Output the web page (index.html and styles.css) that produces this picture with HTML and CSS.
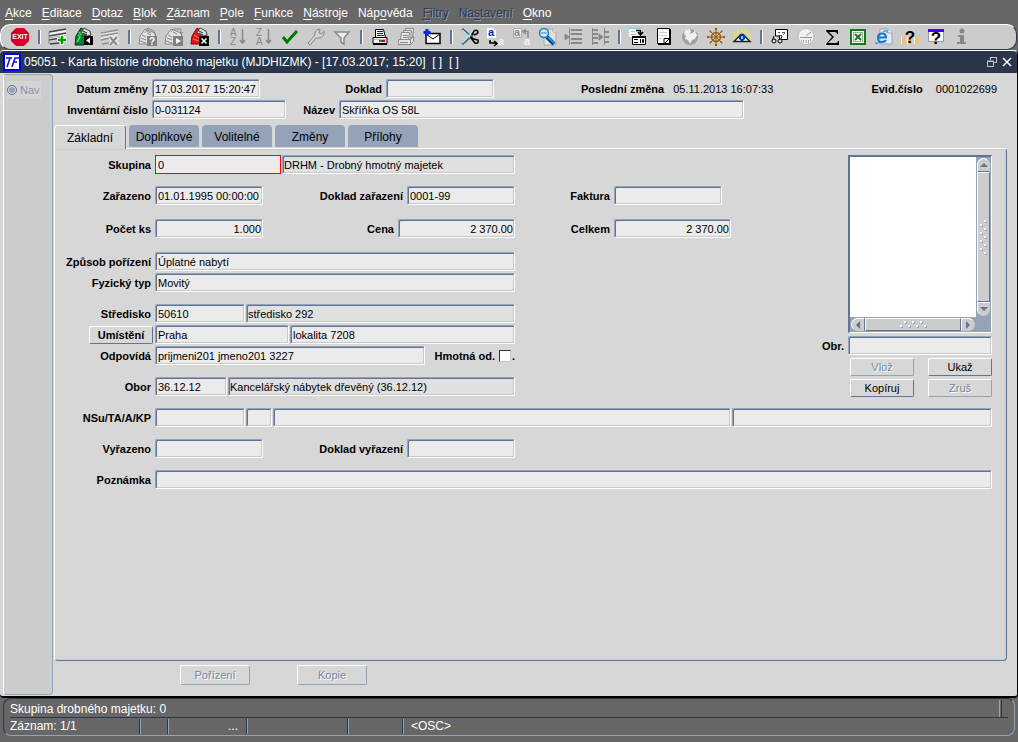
FILE: index.html
```html
<!DOCTYPE html>
<html lang="cs">

<head>
    <meta charset="UTF-8">
    <meta name="viewport" content="width=device-width, initial-scale=1.0">
    <title>Karta historie drobného majetku</title>
    <link rel="stylesheet" href="styles.css">
</head>

<body>
    <nav class="menu">
        <button type="button"><u>A</u>kce</button>
        <button type="button"><u>E</u>ditace</button>
        <button type="button"><u>D</u>otaz</button>
        <button type="button"><u>B</u>lok</button>
        <button type="button"><u>Z</u>áznam</button>
        <button type="button"><u>P</u>ole</button>
        <button type="button"><u>F</u>unkce</button>
        <button type="button"><u>N</u>ástroje</button>
        <button type="button">Náp<u>o</u>věda</button>
        <button type="button" disabled><u>F</u>iltry</button>
        <button type="button" disabled>Na<u>s</u>tavení</button>
        <button type="button"><u>O</u>kno</button>
    </nav>

    <div class="toolbar">
        <button type="button" aria-label="Konec"><svg viewBox="0 0 20 20"><path d="M6 1h8l5 5v8l-5 5H6l-5-5V6z" fill="#d4002a"/><text x="10" y="12" text-anchor="middle" class="exit-text">EXIT</text></svg></button>
        <span class="sep"></span>
        <button type="button" aria-label="Nový záznam"><svg viewBox="0 0 20 20"><path d="M1 6l17-3v8L1 14z" fill="#f4f4f4"/><path d="M1 5l17-3M1 9l17-3M1 13l12-2M2 17l9-1" stroke="#444" stroke-width="1.5" fill="none"/><path d="M1 11l17-3" stroke="#aaa"/><path d="M1 5v12" stroke="#888"/><path d="M12 8h4v3h3v4h-3v3h-4v-3H9v-4h3z" fill="#fff"/><path d="M13 9h2v3h3v2h-3v3h-2v-3h-3v-2h3z" fill="#00a000" stroke="#00a000" stroke-width=".5"/></svg></button>
        <button type="button" aria-label="Uložit"><svg viewBox="0 0 20 20"><path d="M2 9l5-8 9 6 1 4-7 7H1z" fill="#008030" stroke="#003010"/><path d="M7 6l3-5 6 3 1 4-4 1z" fill="#ddd" stroke="#444"/><path d="M9 4l4 2M9 6l4 2" stroke="#222"/><path d="M4 8l2 2-3 5M5 5l2 3" stroke="#40e060" stroke-width="1.5" fill="none"/><path d="M10 9h9v9h-9z"/><path d="M16 10.500v6l-4-3z" fill="#fff"/></svg></button>
        <button type="button" aria-label="Smazat záznam"><svg viewBox="0 0 20 20"><path d="M1 6l17-3v6L1 13z" fill="#e6e6e6"/><path d="M1 6l17-3M1 9l17-3M1 13l9-2M2 17l7-1" stroke="#909090" stroke-width="1.5" fill="none"/><path d="M10 10l8 8M18 10l-8 8" stroke="#eee" stroke-width="4"/><path d="M10 10l7 8M17 10l-7 8" stroke="#888" stroke-width="2"/></svg></button>
        <span class="sep"></span>
        <button type="button" aria-label="Zadat dotaz"><svg viewBox="0 0 20 20"><path d="M2 9l5-7 10 4 1 4-6 7H1z" fill="#e2e2e2" stroke="#888"/><path d="M7 6l3-5 6 3 1 4M9 4l4 2M9 6l4 2M4 8l4 2M3 11l5 2M2 14l6 2" stroke="#888" fill="none"/><path d="M9 9h10v10H9z" fill="#808080"/><text x="14" y="17.500" text-anchor="middle" class="badge-text">?</text></svg></button>
        <button type="button" aria-label="Provést dotaz"><svg viewBox="0 0 20 20"><path d="M2 9l5-7 10 4 1 4-6 7H1z" fill="#e2e2e2" stroke="#888"/><path d="M7 5l3-3h7v5M15 5l2 2 2-2M9 5l4 2M4 8l4 2M3 11l5 2M2 14l6 2" stroke="#888" fill="none"/><path d="M9 9h10v10H9z" fill="#808080"/><path d="M12 11v6l5-3z" fill="#fff"/></svg></button>
        <button type="button" aria-label="Zrušit dotaz"><svg viewBox="0 0 20 20"><path d="M2 9l5-8 9 6 2 4-8 6H1z" fill="#e01818" stroke="#800"/><path d="M7 6l3-5 6 3 1 4-4 1z" fill="#ddd" stroke="#444"/><path d="M9 4l4 2M9 6l4 2" stroke="#333"/><path d="M4 8l5 3M3 12l6 2" stroke="#ff7070"/><path d="M9 9h10v10H9z"/><path d="M11.500 11.500l5 5m0-5l-5 5" stroke="#fff" stroke-width="1.5"/></svg></button>
        <span class="sep"></span>
        <button type="button" aria-label="Třídit vzestupně"><svg viewBox="0 0 20 20"><g class="sort-text"><text x="2" y="9">A</text><text x="2" y="18">Z</text></g><path d="M14.500 2v14M12 13l2.500 3 2.500-3" fill="none" stroke="#888" stroke-width="1.5"/></svg></button>
        <button type="button" aria-label="Třídit sestupně"><svg viewBox="0 0 20 20"><g class="sort-text"><text x="2" y="9">Z</text><text x="2" y="18">A</text></g><path d="M14.500 2v14M12 13l2.500 3 2.500-3" fill="none" stroke="#888" stroke-width="1.5"/></svg></button>
        <button type="button" aria-label="Potvrdit"><svg viewBox="0 0 20 20"><path d="M3 10l4 5L17 4" fill="none" stroke="#007800" stroke-width="3"/></svg></button>
        <button type="button" aria-label="Nastavení"><svg viewBox="0 0 20 20"><path d="M2 16l7-8q-1-5 5-6l-1 4 3 1 2-3q1 6-5 7-2 0-3 0l-6 7z" fill="#d4d4d4" stroke="#888"/></svg></button>
        <button type="button" aria-label="Filtr"><svg viewBox="0 0 20 20"><path d="M3 5h14l-5 6v6l-3-2v-4z" fill="#eee" stroke="#888" stroke-width="1.5"/></svg></button>
        <span class="sep"></span>
        <button type="button" aria-label="Tisk"><svg viewBox="0 0 20 20"><path d="M5.500 2.500h8l2 8h-10z" fill="#fff" stroke="#000"/><path d="M7 4.500h6M7 6.500h6M7 8.500h7" stroke="#0018c0"/><path d="M3 10.500h14v6H3z" fill="#eee" stroke="#000"/><path d="M4 12.500h12" stroke="#bbb"/><path d="M9 14h3" stroke="#00a000" stroke-width="2"/><path d="M12 14h3" stroke="#e00000" stroke-width="2"/><path d="M3 17.500h14" stroke="#000"/></svg></button>
        <button type="button" aria-label="Tisk sestavy"><svg viewBox="0 0 20 20" fill="#e4e4e4" stroke="#8a8a8a"><path d="M9.500 1.500h8l-1 9h-8z"/><path d="M7.500 3.500h8l-1 9h-8z"/><path d="M5.500 5.500h8l-1 7h-8z"/><path d="M2.500 12.500h12v5h-12zM14.500 12.500l3-3v5l-3 3M7 8.500h5M7 10.500h5M4 15.500h8"/></svg></button>
        <button type="button" aria-label="Odeslat poštou"><svg viewBox="0 0 20 20"><path d="M4 6.500h14v10H4z" fill="#fff" stroke="#000" stroke-width="1.5"/><path d="M4 7l7 5 7-5" stroke="#000" fill="none"/><path d="M5 2v7M1.500 5.500h7" stroke="#0030d0" stroke-width="3"/></svg></button>
        <span class="sep"></span>
        <button type="button" aria-label="Vyjmout"><svg viewBox="0 0 20 20" fill="none"><path d="M2 2l10 9M2 17L14 6" stroke="#3e6670" stroke-width="3"/><path d="M2 3l9 8M2 16l9-9" stroke="#b8eef4" stroke-width="1.5"/><path d="M10 10l4 2 4 1q1 4-3 3l-4-5M12 8l2-4q3-2 4 1 0 2-4 3" stroke="#000" stroke-width="1.5"/></svg></button>
        <button type="button" aria-label="Kopírovat"><svg viewBox="0 0 20 20"><path d="M1 1h6l3 3v7H1z" fill="#fff"/><text x="2" y="9" class="letter blue">a</text><path d="M4 13v3h6M8 14l3 2.500L8 19" stroke="#000" stroke-width="1.5" fill="none"/><text x="12" y="18" class="letter light">a</text></svg></button>
        <button type="button" aria-label="Vložit"><svg viewBox="0 0 20 20"><path d="M1.500 1.500h8v9h-8z" fill="#eee" stroke="#aaa"/><text x="2" y="9" class="letter gray">a</text><path d="M11 4.500h5v6M14 2l-3 2.500L14 7" stroke="#888" stroke-width="1.5" fill="none"/><text x="12" y="18" class="letter light">a</text></svg></button>
        <button type="button" aria-label="Hledat"><svg viewBox="0 0 20 20"><path d="M6 2h9l3 3v13H6z" fill="#e4e2d6" stroke="#aaa"/><path d="M15 2v3h3" fill="#fff" stroke="#aaa"/><circle cx="6" cy="6" r="4.500" fill="#c8f4fa" stroke="#2878a8" stroke-width="1.5"/><path d="M3 6h6" stroke="#3080b0"/><path d="M9 10l7 7" stroke="#0038b0" stroke-width="4"/><path d="M10 10l6 6" stroke="#30a8ff" stroke-width="1.5"/></svg></button>
        <button type="button" aria-label="Odsadit"><svg viewBox="0 0 20 20" fill="none" stroke="#888"><path d="M5.500 1v17"/><path d="M7 3h11M7 7h11M7 12h11M7 16h11" stroke-width="2"/><path d="M1 7l4 3-4 3z" fill="#888"/></svg></button>
        <button type="button" aria-label="Rozdělit"><svg viewBox="0 0 20 20" fill="none" stroke="#888"><path d="M2.500 1v17M14.500 1v17"/><path d="M3 3h5M3 7h5M3 11h5M3 16h5M14 5h5M14 10h5M14 15h5" stroke-width="2"/><path d="M9 7l4 3-4 3z" fill="#888"/></svg></button>
        <span class="sep"></span>
        <button type="button" aria-label="Seznam hodnot"><svg viewBox="0 0 20 20"><path d="M1 1h13v9H1z" fill="#f8f8f8"/><path d="M1 1.500h13" stroke="#80c8f0"/><path d="M3 4.500h4M3 7.500h5" stroke="#bbb"/><path d="M8 3.500h4.500V8M10 5l2.500 3L15 5" stroke="#000" stroke-width="1.5" fill="none"/><path d="M4.500 9.500h13v8h-13z" fill="#fff" stroke="#000"/><path d="M4 10h14" stroke="#000" stroke-width="2"/><path d="M6 12.500h4M6 15.500h4M12.500 12v4M14.500 12.500h1v3h-1z" stroke="#000" fill="none"/></svg></button>
        <button type="button" aria-label="Editor"><svg viewBox="0 0 20 20"><path d="M3.500 1.500h12v15h-12z" fill="#fff" stroke="#000"/><path d="M16.500 2v15.500H4" stroke="#000" fill="none"/><path d="M5 5.500h8M5 8.500h8M5 11.500h3" stroke="#ccc"/><path d="M15 11.500h-5v5M10 17l6-6" stroke="#000" fill="none"/></svg></button>
        <button type="button" aria-label="Web"><svg viewBox="0 0 20 20"><circle cx="10" cy="10" r="8" fill="#a0a0a0"/><path d="M5 3l5-1 1 3-2 2 6-2 2 3-2 4-3 1-2 4-2-4-3-1 1-3-2-2zM14 3l2 2-2 1z" fill="#f0f0f0"/></svg></button>
        <button type="button" aria-label="Navigátor"><svg viewBox="0 0 20 20" fill="none" stroke="#985800"><circle cx="10" cy="10" r="4.500" stroke-width="1.5"/><path d="M10 3v14M3 10h14M5 5l10 10M15 5L5 15"/><path d="M9 2h2M9 18h2M2 9v2M18 9v2M4 5l1-1M15 4l1 1M4 15l1 1M15 16l1-1" stroke-width="2"/></svg></button>
        <button type="button" aria-label="Zobrazit"><svg viewBox="0 0 20 20"><path d="M10 2v3M5 3l2 3M15 3l-2 3M2 6l3 3M18 6l-3 3M1 11h2M17 11h2" stroke="#f4f000" stroke-width="1.5"/><path d="M2 14.500l7-7h2l7 7z" fill="#fff" stroke="#222" stroke-width="1.5"/><path d="M7 8h6v4l-2 2H9l-2-2z" fill="#0030d0"/><path d="M9 9h2v3H9z" fill="#40f0f0"/></svg></button>
        <span class="sep"></span>
        <button type="button" aria-label="Náhled"><svg viewBox="0 0 20 20"><path d="M5.500 2.500h12v10h-8V9h-4z" fill="#fff" stroke="#000"/><path d="M8 5.500h2M12 5.500h3M8 8.500h4M13 8l2-2" stroke="#555"/><path d="M4 9l-2 5M12 9l-2 5" stroke="#000"/><circle cx="4" cy="14" r="2" fill="#ddd" stroke="#000"/><circle cx="10" cy="14" r="2" fill="#ddd" stroke="#000"/></svg></button>
        <button type="button" aria-label="Časovač"><svg viewBox="0 0 20 20"><circle cx="10" cy="9.500" r="8" fill="#f0f0f0" stroke="#aaa" stroke-dasharray="2 1"/><path d="M4 10.500h12M10 9l5-4" stroke="#999"/><path d="M5.500 13v2M7.500 13v3M9.500 13.500h1v2h-1M12.500 13v3M14.500 12v2" stroke="#aaa" fill="none"/></svg></button>
        <button type="button" aria-label="Součet"><svg viewBox="0 0 20 20"><path d="M4 3h12v4h-1q0-2-2-2H7l5 5-6 6h8q2 0 2-2h1v4H4v-1l6-7-6-6z"/></svg></button>
        <button type="button" aria-label="Export do Excelu"><svg viewBox="0 0 20 20"><path d="M3 3h14v14H3z" fill="#fff" stroke="#187818" stroke-width="2"/><path d="M5.500 5.500h9v9h-9z" fill="#fff" stroke="#187818" stroke-dasharray="1 1"/><path d="M7 7l6 6M13 7l-6 6" stroke="#187818" stroke-width="2"/></svg></button>
        <button type="button" aria-label="Internet"><svg viewBox="0 0 20 20"><path d="M6 2h8l4 4v11H6z" fill="#e4ecfa" stroke="#8fa4c0"/><path d="M14 2v4h4" fill="#fff" stroke="#8fa4c0"/><path d="M4 10.500h8q0-4-4-4-4 0-4 4.500t4 4q3 0 4-2" stroke="#1878c8" stroke-width="2" fill="none"/><path d="M2 15q-1 3 3 0M9 5q5-3 4 1" stroke="#40a8e8" stroke-width="1.5" fill="none"/></svg></button>
        <button type="button" aria-label="Nápověda k poli"><svg viewBox="0 0 20 20"><path d="M1 10h4v7H1zM7 10h5v7H7zM14 10h5v7h-5z" fill="#f8c070"/><path d="M1 10h1v7H1zM7 10h1v7H7zM14 10h1v7h-1z" fill="#fff"/><text x="10" y="16" text-anchor="middle" class="help-text">?</text></svg></button>
        <button type="button" aria-label="Nápověda k oknu"><svg viewBox="0 0 20 20"><path d="M2.500 2.500h15v12h-15z" fill="#fff" stroke="#999"/><path d="M2 3.500h16" stroke="#4000ff" stroke-width="3"/><text x="10" y="17" text-anchor="middle" class="help-text">?</text></svg></button>
        <button type="button" aria-label="Informace"><svg viewBox="0 0 20 20" fill="#888"><circle cx="10" cy="4" r="2.500"/><path d="M6 8h6v7h2v2H5v-2h3v-5H6z"/></svg></button>
    </div>

    <main class="window">
        <header class="title-bar">
            <svg class="logo" viewBox="0 0 18 18"><path d="M1 1h16v16H1z" fill="#fff" stroke="#0000e8" stroke-width="2"/><path d="M3 5h6M7 5L4 14M9 14l3-9h4M11 9h3" stroke="#1010c8" stroke-width="1.500" fill="none"/></svg>
            <h1>05051 - Karta historie drobného majetku (MJDHIZMK) - [17.03.2017; 15:20]&nbsp; [ ]&nbsp; [ ]</h1>
            <button type="button" aria-label="Obnovit"><svg viewBox="0 0 12 12" fill="none" stroke="#c8c8c8"><path d="M4.500 4V1.500h6v5H8M4 1.500h7M1.500 5.500h6v5h-6zM1 5h7"/></svg></button>
            <button type="button" aria-label="Zavřít"><svg viewBox="0 0 12 12"><path d="M2 2l8 8M10 2l-8 8" stroke="#fff" stroke-width="1.500"/></svg></button>
        </header>

        <div class="content">
            <aside class="sidebar">
                <label><input type="radio" name="nav" disabled>Nav</label>
            </aside>

            <div class="card">
                <div class="record">
                    <div class="row">
                        <label class="lead" for="datum">Datum změny</label>
                        <input class="w-date" id="datum" value="17.03.2017 15:20:47">
                        <label class="second" for="doklad">Doklad</label>
                        <input class="w-date" id="doklad">
                        <span class="changed"><b>Poslední změna</b> 05.11.2013 16:07:33</span>
                        <span class="evid"><b>Evid.číslo</b> 0001022699</span>
                    </div>
                    <div class="row">
                        <label class="lead" for="inv">Inventární číslo</label>
                        <input class="w-code" id="inv" value="0-031124">
                        <label class="name" for="nazev">Název</label>
                        <input class="w-name" id="nazev" value="Skříňka OS 58L">
                    </div>
                </div>

                <div class="tabs" role="tablist">
                    <button type="button" role="tab" class="active" aria-selected="true">Základní</button>
                    <button type="button" role="tab">Doplňkové</button>
                    <button type="button" role="tab">Volitelné</button>
                    <button type="button" role="tab">Změny</button>
                    <button type="button" role="tab">Přílohy</button>
                </div>

                <section class="panel">
                    <div class="upper">
                        <div class="form">
                            <div class="row">
                                <label class="lead" for="skupina">Skupina</label>
                                <div class="fields">
                                    <input class="w-group current" id="skupina" value="0">
                                    <input class="fill locked" aria-label="Název skupiny" value="DRHM - Drobný hmotný majetek" readonly>
                                </div>
                            </div>
                            <div class="row apart">
                                <label class="lead" for="zarazeno">Zařazeno</label>
                                <div class="fields">
                                    <input class="w-date" id="zarazeno" value="01.01.1995 00:00:00">
                                    <label class="push" for="dokladZar">Doklad zařazení</label>
                                    <input class="w-date" id="dokladZar" value="0001-99">
                                </div>
                                <label class="third" for="faktura">Faktura</label>
                                <input class="w-date" id="faktura">
                            </div>
                            <div class="row loose">
                                <label class="lead" for="pocet">Počet ks</label>
                                <div class="fields">
                                    <input class="w-date number" id="pocet" value="1.000">
                                    <label class="push" for="cena">Cena</label>
                                    <input class="w-price number" id="cena" value="2 370.00">
                                </div>
                                <label class="third" for="celkem">Celkem</label>
                                <input class="w-price number" id="celkem" value="2 370.00">
                            </div>
                            <div class="row loose">
                                <label class="lead" for="zpusob">Způsob pořízení</label>
                                <div class="fields"><input class="fill" id="zpusob" value="Úplatné nabytí"></div>
                            </div>
                            <div class="row">
                                <label class="lead" for="typ">Fyzický typ</label>
                                <div class="fields"><input class="fill" id="typ" value="Movitý"></div>
                            </div>
                            <div class="row apart">
                                <label class="lead" for="stredisko">Středisko</label>
                                <div class="fields">
                                    <input class="w-short" id="stredisko" value="50610">
                                    <input class="fill locked" aria-label="Název střediska" value="středisko 292" readonly>
                                </div>
                            </div>
                            <div class="row">
                                <div class="lead action"><button type="button" class="btn strong">Umístění</button></div>
                                <div class="fields">
                                    <input class="w-code" aria-label="Umístění" value="Praha">
                                    <input class="fill" aria-label="Lokalita" value="lokalita 7208">
                                </div>
                            </div>
                            <div class="row">
                                <label class="lead" for="odpovida">Odpovídá</label>
                                <div class="fields">
                                    <input class="w-person" id="odpovida" value="prijmeni201 jmeno201 3227">
                                    <label class="push" for="hmotna">Hmotná od.</label>
                                    <input type="checkbox" id="hmotna">
                                    <b>.</b>
                                </div>
                            </div>
                            <div class="row apart">
                                <label class="lead" for="obor">Obor</label>
                                <div class="fields">
                                    <input class="w-branch" id="obor" value="36.12.12">
                                    <input class="fill locked" aria-label="Název oboru" value="Kancelářský nábytek dřevěný (36.12.12)" readonly>
                                </div>
                            </div>
                        </div>

                        <aside class="picture">
                            <div class="viewer">
                                <div class="canvas"></div>
                                <div class="scroll vertical">
                                    <button type="button" aria-label="Nahoru"><svg viewBox="0 0 8 8"><path d="M0 6h8L4 2z"/></svg></button>
                                    <div class="thumb"><svg viewBox="0 0 9 36"><path d="M5 1h2v2H5zM1 5h2v2H1zM5 9h2v2H5zM1 13h2v2H1zM5 17h2v2H5zM1 21h2v2H1zM5 25h2v2H5zM1 29h2v2H1zM5 33h2v2H5z"/></svg></div>
                                    <button type="button" aria-label="Dolů"><svg viewBox="0 0 8 8"><path d="M0 2h8L4 6z"/></svg></button>
                                </div>
                                <div class="scroll horizontal">
                                    <button type="button" aria-label="Vlevo"><svg viewBox="0 0 8 8"><path d="M6 0v8L2 4z"/></svg></button>
                                    <div class="thumb"><svg viewBox="0 0 28 9"><path d="M1 5h2v2H1zM5 1h2v2H5zM9 5h2v2H9zM13 1h2v2h-2zM17 5h2v2h-2zM21 1h2v2h-2zM25 5h2v2h-2z"/></svg></div>
                                    <button type="button" aria-label="Vpravo"><svg viewBox="0 0 8 8"><path d="M2 0v8l4-4z"/></svg></button>
                                </div>
                            </div>
                            <label for="obr">Obr.</label>
                            <input id="obr">
                            <div class="picture-buttons">
                                <button type="button" class="btn" disabled>Vlož</button>
                                <button type="button" class="btn">Ukaž</button>
                                <button type="button" class="btn">Kopíruj</button>
                                <button type="button" class="btn" disabled>Zruš</button>
                            </div>
                        </aside>
                    </div>

                    <div class="row">
                        <label class="lead" for="nsu">NSu/TA/A/KP</label>
                        <div class="fields wide">
                            <input class="w-short" id="nsu">
                            <input class="w-tiny" aria-label="TA">
                            <input class="fill" aria-label="A">
                            <input class="w-kp" aria-label="KP">
                        </div>
                    </div>
                    <div class="row apart">
                        <label class="lead" for="vyrazeno">Vyřazeno</label>
                        <div class="fields">
                            <input class="w-date" id="vyrazeno">
                            <label class="push" for="dokladVyr">Doklad vyřazení</label>
                            <input class="w-date" id="dokladVyr">
                        </div>
                    </div>
                    <div class="row apart">
                        <label class="lead" for="poznamka">Poznámka</label>
                        <div class="fields wide"><input class="fill" id="poznamka"></div>
                    </div>
                </section>

                <div class="actions">
                    <button type="button" class="btn" disabled>Pořízení</button>
                    <button type="button" class="btn" disabled>Kopie</button>
                </div>
            </div>
        </div>
    </main>

    <footer class="status">
        <div class="message">Skupina drobného majetku: 0</div>
        <div class="cells">
            <span class="cell-record">Záznam: 1/1</span>
            <span class="cell-small"></span>
            <span class="cell-list">...</span>
            <span class="cell-mode"></span>
            <span class="cell-flag"></span>
            <span class="cell-osc">&lt;OSC&gt;</span>
        </div>
    </footer>
</body>

</html>
```
FILE: styles.css
```css
* {
    box-sizing: border-box;
}

body {
    display: flex;
    flex-direction: column;
    min-height: 100vh;
    margin: 0;
    padding-bottom: 6px;
    background-color: #676767;
    color: #000;
    font-family: "Liberation Sans", Arial, sans-serif;
    font-size: 11px;
}

button,
input {
    margin: 0;
    padding: 0;
    border: none;
    background: none;
    color: inherit;
    font: inherit;
}

svg {
    display: block;
}

/* menu */
.menu {
    display: flex;
    gap: 10px;
    height: 24px;
    padding: 2px 5px 0;
    color: #fff;
    font-size: 12px;
}

.menu u {
    text-underline-offset: 2px;
}

.menu button:disabled {
    color: #2f3b50;
    text-shadow: 1px 1px 0 #8c97aa;
}

/* toolbar */
.toolbar {
    display: flex;
    align-items: center;
    height: 26px;
    margin-right: 1px;
    padding-left: 6px;
    background-color: #ccc;
    border: 1px solid #fff;
    border-right-color: #2a364c;
    border-bottom-color: #2a364c;
    border-radius: 10px;
}

.toolbar button {
    flex: 0 0 26px;
    padding: 0 3px;
}

.toolbar svg {
    width: 20px;
    height: 20px;
}

.exit-text {
    fill: #fff;
    font-size: 7px;
    font-weight: bold;
}

.badge-text {
    fill: #fff;
    font-size: 10px;
    font-weight: bold;
}

.sort-text {
    fill: #888;
    font-size: 10px;
}

.letter {
    font-size: 11px;
    font-weight: bold;
}

.letter.blue {
    fill: #0020e0;
}

.letter.gray {
    fill: #888;
}

.letter.light {
    fill: #f4f4f4;
}

.help-text {
    font-size: 17px;
    font-weight: bold;
}

.sep {
    flex: 0 0 12px;
    height: 14px;
}

.sep::before {
    content: "";
    display: block;
    width: 2px;
    height: 14px;
    margin-left: 5px;
    background-color: #5f7496;
    border-right: 1px solid #fff;
}

/* window */
.window {
    display: flex;
    flex: 1;
    flex-direction: column;
    background-color: #d7d7d7;
    border-top: 1px solid #fff;
    border-right: 1px solid #000;
    border-bottom: 2px solid #000;
    border-radius: 4px;
}

.title-bar {
    display: flex;
    align-items: center;
    gap: 3px;
    height: 22px;
    padding: 0 4px 0 3px;
    background-color: #2a364c;
    border-radius: 4px 4px 0 0;
    color: #fff;
}

.title-bar h1 {
    flex: 1;
    margin: 0;
    font-size: 12px;
    font-weight: normal;
}

.logo {
    width: 18px;
    height: 18px;
}

.title-bar button svg {
    width: 12px;
    height: 12px;
}

.content {
    display: flex;
    flex: 1;
    padding: 1px 0 1px 3px;
}

.sidebar {
    width: 50px;
    padding: 6px 3px;
    background-color: #ccc;
    border: 1px solid #95a3b8;
    border-left-color: #fff;
    border-radius: 4px;
}

.sidebar label {
    display: flex;
    align-items: center;
    gap: 3px;
    width: 34px;
    height: 18px;
    background-color: #d4d4d4;
    color: #8496b0;
}

.sidebar input {
    appearance: none;
    width: 10px;
    height: 10px;
    background-color: #95a3b8;
    border: 1px solid #5f7496;
    border-radius: 50%;
    box-shadow: inset 0 0 0 1px #ddd;
}

.card {
    display: flex;
    flex: 1;
    flex-direction: column;
    padding: 5px 10px 0 1px;
}

/* form rows */
.row {
    display: flex;
    align-items: center;
    gap: 4px;
    height: 19px;
    margin-bottom: 2px;
}

.row.apart {
    margin-top: 12px;
}

.row.loose {
    margin-top: 14px;
}

label,
.row b {
    font-weight: bold;
    white-space: nowrap;
}

.sidebar label {
    font-weight: normal;
}

.row .lead {
    flex: none;
    width: 96px;
    text-align: right;
}

/* the button stands closer to its field than a label does */
.row .lead.action {
    width: 98px;
    margin-right: -2px;
}

.row input {
    flex: none;
}

.row input:not([type="checkbox"]),
.picture input {
    height: 19px;
    padding: 0 2px;
    background-color: #ebebeb;
    border: 1px solid #95a3b8;
    border-right-color: #fff;
    border-bottom-color: #fff;
    border-radius: 2px;
    box-shadow: inset 1px 1px 0 #5f7496, inset -1px -1px 0 #c9c9c9;
}

.row input.locked {
    padding: 0 1px;
    background-color: #e0e0e0;
}

.row input.current {
    border: 1px solid #f00;
    border-radius: 0;
    box-shadow: none;
}

.row input.number {
    padding: 0 1px;
    text-align: right;
}

.row input.fill {
    flex: 1;
    min-width: 0;
}

.row input[type="checkbox"] {
    appearance: none;
    width: 12px;
    height: 12px;
    background-color: #fff;
    border: 1px solid #2a364c;
    border-right-color: #c9c9c9;
    border-bottom-color: #c9c9c9;
}

.fields {
    display: flex;
    flex: 0 0 360px;
    align-items: center;
    gap: 1px;
}

.fields.wide {
    flex: 1;
}

.push {
    margin-right: 3px;
    margin-left: auto;
}

.third {
    width: 91px;
    text-align: right;
}

.w-tiny {
    width: 26px;
}

.w-branch {
    width: 72px;
}

.w-short {
    width: 90px;
}

.w-date {
    width: 108px;
}

.w-price {
    width: 117px;
}

.w-group {
    width: 126px;
}

.w-code {
    width: 134px;
}

.w-kp {
    width: 260px;
}

.w-person {
    width: 270px;
}

.w-name {
    width: 405px;
}

/* record header */
.record {
    height: 46px;
}

.record .row {
    padding-right: 10px;
}

.record .lead {
    width: 94px;
}

.record .second {
    width: 118px;
    text-align: right;
}

.record .name {
    width: 45px;
    text-align: right;
}

.changed {
    margin-left: 83px;
}

.changed b {
    margin-right: 6px;
}

.evid {
    margin-left: auto;
}

.evid b {
    margin-right: 10px;
}

/* tabs */
.tabs {
    display: flex;
    gap: 3px;
    height: 23px;
}

.tabs button {
    width: 70px;
    height: 22px;
    padding-top: 2px;
    background-color: #95a3b8;
    border-radius: 4px 4px 0 0;
    font-size: 12px;
}

/* the active tab runs into the panel below it */
.tabs .active {
    width: 72px;
    height: 24px;
    padding-top: 0;
    background-color: #d7d7d7;
    border: 1px solid #fff;
    border-right-color: #5f7496;
    border-bottom: none;
    z-index: 1;
}

.panel {
    flex: 1;
    padding: 6px 14px 6px 0;
    border: 1px solid #fff;
    border-right-color: #5f7496;
    border-bottom-color: #5f7496;
    border-radius: 0 4px 4px 4px;
    box-shadow: inset 0 1px 0 #ccc, inset -1px -1px 0 #ccc;
}

.upper {
    display: flex;
    justify-content: space-between;
    margin-bottom: 10px;
}

/* picture viewer */
.picture {
    display: grid;
    grid-template-columns: auto 144px;
    align-items: center;
    align-content: start;
    gap: 3px 4px;
}

.viewer {
    display: grid;
    grid-template-columns: 1fr 15px;
    grid-template-rows: 160px 15px;
    grid-column: 2;
    background-color: #95a3b8;
    border: 1px solid #fff;
    border-top: 2px solid #5f7496;
    border-left: 2px solid #5f7496;
}

.canvas {
    background-color: #fff;
}

.scroll {
    display: flex;
    padding: 1px;
}

.scroll.vertical {
    flex-direction: column;
}

.scroll button,
.thumb {
    display: flex;
    align-items: center;
    justify-content: center;
    background-color: #ccc;
    border: 1px solid #fff;
    border-right-color: #5f7496;
    border-bottom-color: #5f7496;
}

.scroll button {
    flex: 0 0 14px;
    fill: #5f7496;
}

.scroll button svg {
    width: 8px;
    height: 8px;
}

.thumb {
    flex: 1;
    fill: #fff;
}

.thumb svg {
    filter: drop-shadow(1px 1px 0 #95a3b8);
}

.vertical .thumb svg {
    width: 9px;
    height: 36px;
}

.horizontal .thumb svg {
    width: 28px;
    height: 9px;
}

.vertical button:first-child {
    border-right-color: #ccc;
    border-radius: 7px 7px 0 0;
}

.vertical button:last-child {
    border-right-color: #ccc;
    border-bottom-color: #ccc;
    border-radius: 0 0 7px 7px;
}

.horizontal button:first-child {
    border-bottom-color: #ccc;
    border-radius: 7px 0 0 7px;
}

.horizontal button:last-child {
    border-right-color: #ccc;
    border-bottom-color: #ccc;
    border-radius: 0 7px 7px 0;
}

.picture-buttons {
    display: grid;
    grid-template-columns: 64px 64px;
    grid-column: 2;
    justify-content: space-between;
    gap: 3px;
    padding-left: 2px;
}

/* buttons */
.btn {
    height: 18px;
    border: 1px solid #fff;
    border-right-color: #5f7496;
    border-bottom-color: #5f7496;
    border-radius: 2px;
}

.btn:disabled {
    border-right-color: #95a3b8;
    border-bottom-color: #95a3b8;
    color: #7486a2;
    text-shadow: 1px 1px 0 #fff;
}

.btn.strong {
    width: 64px;
    font-weight: bold;
}

.actions {
    display: flex;
    gap: 47px;
    padding: 4px 0 10px 126px;
}

.actions .btn {
    width: 70px;
    height: 20px;
}

/* status bar */
.status {
    height: 38px;
    margin: 0 3px;
    padding: 1px 6px;
    border: 1px solid #95a3b8;
    border-top-color: #2a364c;
    border-left-color: #2a364c;
    border-radius: 8px;
    color: #fff;
    font-size: 12px;
}

.message {
    height: 18px;
    padding-top: 2px;
    border-bottom: 1px solid #2a364c;
    background: linear-gradient(to right, #95a3b8 1px, #676767 1px, #676767 2px, #2a364c 2px) no-repeat right 6px top / 3px 17px;
}

.cells {
    display: flex;
    height: 15px;
    margin-top: 1px;
    line-height: 15px;
}

.cells span {
    border-right: 1px solid #95a3b8;
    box-shadow: inset -1px 0 0 #2a364c;
}

.cell-record {
    width: 131px;
}

.cell-small {
    width: 28px;
}

.cell-list {
    width: 79px;
    padding-right: 9px;
    text-align: right;
}

.cell-mode {
    width: 101px;
}

.cell-flag {
    width: 55px;
}

.cells .cell-osc {
    padding-left: 7px;
    border: none;
    box-shadow: none;
}
```
